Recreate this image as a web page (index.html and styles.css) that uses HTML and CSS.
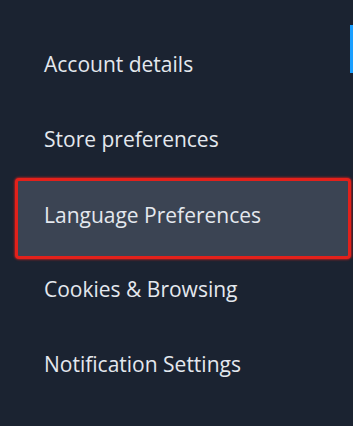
FILE: index.html
```html
<!DOCTYPE html>
<html>
<head>
<meta charset="utf-8">
<link rel="stylesheet" href="styles.css">
</head>
<body>
<div class="page">
  <nav class="menu">
    <div class="item">Account details</div>
    <div class="item">Store preferences</div>
    <div class="item active">Language Preferences</div>
    <div class="item">Cookies &amp; Browsing</div>
    <div class="item">Notification Settings</div>
  </nav>
  <div class="side"><div class="tab"></div></div>
</div>
</body>
</html>
```
FILE: styles.css
```css
html, body {
  margin: 0;
  padding: 0;
  background: #1b2331;
}
.page {
  display: flex;
  width: 353px;
  height: 426px;
  overflow: hidden;
}
.menu {
  flex: 1;
  display: flex;
  flex-direction: column;
  padding: 26px 0 0 15px;
}
.item {
  height: 75px;
  flex: none;
  display: flex;
  align-items: center;
  padding-left: 29px;
  box-sizing: border-box;
  font-family: "Open Sans", "Noto Sans", sans-serif;
  font-size: 21px;
  color: #e4e8ee;
}
.item.active {
  background: #3b4453;
  border: 3px solid #e3211b;
  border-radius: 4px;
  padding-left: 26px;
  padding-bottom: 7px;
  margin-right: -1px;
  height: 81px;
  margin-top: 2px;
  margin-bottom: -8px;
  box-shadow: 0 0 2px 1px rgba(227, 33, 27, 0.6);
  position: relative;
  z-index: 1;
}
.side {
  width: 3px;
  padding-top: 25px;
}
.tab {
  width: 3px;
  height: 48px;
  background: #1a9fff;
}
```
